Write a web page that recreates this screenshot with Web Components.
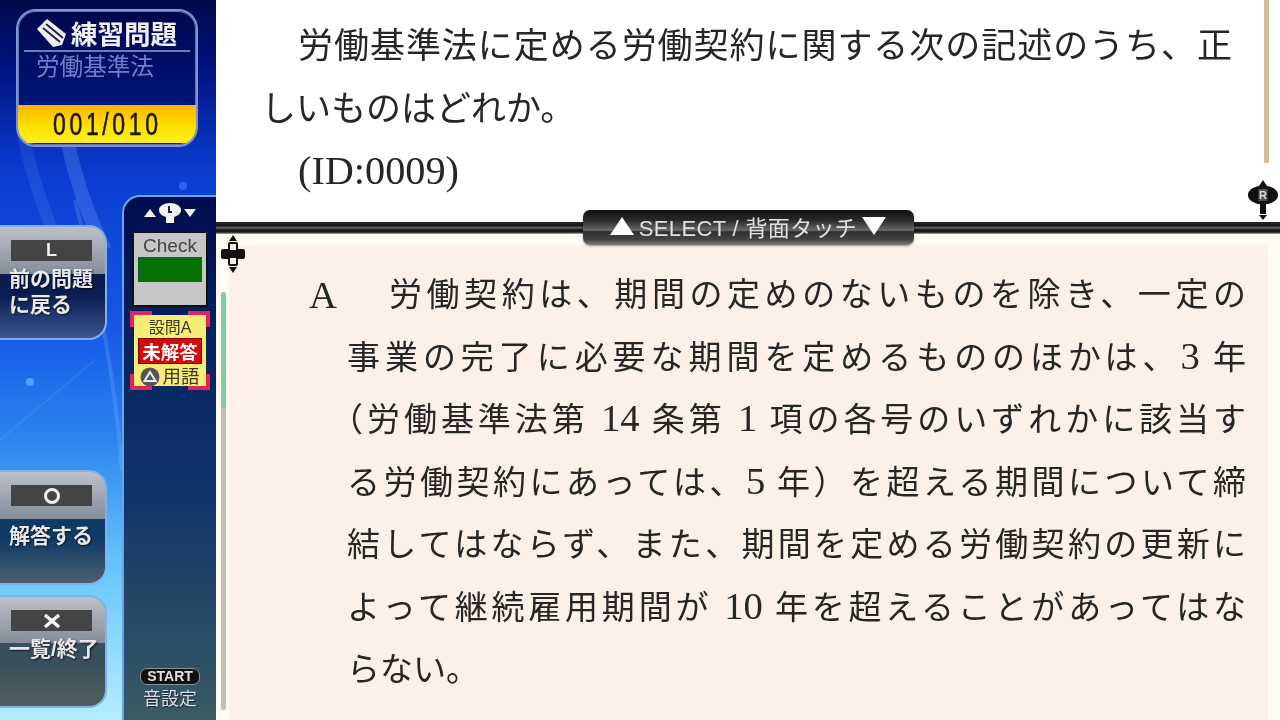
<!DOCTYPE html>
<html lang="ja">
<head>
<meta charset="utf-8">
<style>
html, body { margin: 0; height: 100%; overflow: hidden; }
body { font-family: "Liberation Sans", "Noto Sans CJK JP", sans-serif; }
/* latin runs sit larger than the kanji in the book text */
text-line b { font-weight: normal; font-size: 1.17em; line-height: 0; }
text-line b.id { font-size: 1.15em; }
</style>
</head>
<body>
<study-screen>
  <study-sidebar slot="side"></study-sidebar>
  <question-pane slot="top">
    <text-line indent>労働基準法に定める労働契約に関する次の記述のうち、正</text-line>
    <text-line left>しいものはどれか。</text-line>
    <text-line indent left><b class="id">(ID:0009)</b></text-line>
  </question-pane>
  <select-bar slot="bar"></select-bar>
  <answer-pane slot="bottom">
    <text-line lead="A">労働契約は、期間の定めのないものを除き、一定の</text-line>
    <text-line>事業の完了に必要な期間を定めるもののほかは、<b>3</b> 年</text-line>
    <text-line hang>（労働基準法第 <b>14</b> 条第 <b>1</b> 項の各号のいずれかに該当す</text-line>
    <text-line>る労働契約にあっては、<b>5</b> 年）を超える期間について締</text-line>
    <text-line>結してはならず、また、期間を定める労働契約の更新に</text-line>
    <text-line>よって継続雇用期間が <b>10</b> 年を超えることがあってはな</text-line>
    <text-line left>らない。</text-line>
  </answer-pane>
</study-screen>

<script>
const SERIF = '"Liberation Serif", "Noto Sans CJK JP", serif';

customElements.define('study-screen', class extends HTMLElement {
  constructor() {
    super();
    this.attachShadow({ mode: 'open' }).innerHTML = `
    <style>
      :host { display: flex; width: 1280px; height: 720px; background: #fff; overflow: hidden; filter: blur(.6px); }
      .main { flex: 1; display: flex; flex-direction: column; min-width: 0; }
      ::slotted([slot=side]) { flex: 0 0 216px; }
      ::slotted([slot=top]) { flex: 0 0 222px; }
      ::slotted([slot=bar]) { flex: 0 0 12px; min-height: 0; }
      ::slotted([slot=bottom]) { flex: 1; }
    </style>
    <slot name="side"></slot>
    <div class="main">
      <slot name="top"></slot>
      <slot name="bar"></slot>
      <slot name="bottom"></slot>
    </div>`;
  }
});

customElements.define('text-line', class extends HTMLElement {
  constructor() {
    super();
    const lead = this.getAttribute('lead');
    this.attachShadow({ mode: 'open' }).innerHTML = `
    <style>
      :host { display: block; position: relative; text-align: justify; text-align-last: justify; white-space: nowrap; }
      :host([left]) { text-align-last: left; }
      :host([indent]) { margin-left: 37px; }
      :host([lead]) { margin-left: 42px; }
      :host([hang]) { margin-left: -17px; }
      .lead { position: absolute; left: -80px; top: 0; font-size: 1.17em; }
    </style>
    ${lead ? `<span class="lead">${lead}</span>` : ''}<slot></slot>`;
  }
});

customElements.define('question-pane', class extends HTMLElement {
  constructor() {
    super();
    this.attachShadow({ mode: 'open' }).innerHTML = `
    <style>
      :host { display: flex; position: relative; background: #fff; color: #262626; box-sizing: border-box;
        padding: 15px 48px 0 45px; font: 35px/63px ${SERIF}; }
      .copy { flex: 1; min-width: 0; }
      .track { position: absolute; right: 11px; top: 0; width: 5px; height: 163px; background: #d2bd94; }
      .mark { position: absolute; right: 2px; top: 180px; line-height: 0; }
    </style>
    <div class="copy"><slot></slot></div>
    <div class="track"></div>
    <div class="mark">
      <svg width="30" height="40" viewBox="0 0 30 40">
        <path d="M15 0l4 6h-8zM15 40l-4-5h8z" fill="#111"/>
        <ellipse cx="15" cy="15" rx="15" ry="9.500" fill="#111"/>
        <rect x="12" y="20" width="6" height="14" fill="#111"/>
        <rect x="10.500" y="9" width="9" height="12" fill="#555"/>
        <text x="15" y="19" text-anchor="middle" font-size="11" font-weight="700" font-family="Liberation Sans" fill="#ddd">R</text>
      </svg>
    </div>`;
  }
});

customElements.define('answer-pane', class extends HTMLElement {
  constructor() {
    super();
    this.attachShadow({ mode: 'open' }).innerHTML = `
    <style>
      :host { display: block; position: relative; background: #fffaf2; min-height: 0; }
      .sheet { position: absolute; inset: 11px 12px 0 13px; background: #fdf0e8; box-sizing: border-box;
        padding: 19px 22px 0 118px; color: #262626; font: 33px/62.5px ${SERIF}; }
      .track { position: absolute; left: 5px; top: 58px; bottom: 10px; width: 5px; border-radius: 2px; background: linear-gradient(#7fd0a0 0 116px, #c8c0aa 116px); }
      .mark { position: absolute; left: 5px; top: 1px; line-height: 0; z-index: 1; }
    </style>
    <div class="sheet"><slot></slot></div>
    <div class="track"></div>
    <div class="mark">
      <svg width="24" height="38" viewBox="0 0 24 38">
        <path d="M12 0l4 6H8zM12 38l-4-6h8z" fill="#111"/>
        <path d="M7 9a2 2 0 0 1 2-2h6a2 2 0 0 1 2 2v5h5a2 2 0 0 1 2 2v6a2 2 0 0 1-2 2h-5v5a2 2 0 0 1-2 2H9a2 2 0 0 1-2-2v-5H2a2 2 0 0 1-2-2v-6a2 2 0 0 1 2-2h5z" fill="#111"/>
        <rect x="9" y="9" width="6" height="6" fill="#f4f0e8"/>
        <rect x="9" y="23" width="6" height="6" fill="#f4f0e8"/>
      </svg>
    </div>`;
  }
});

customElements.define('select-bar', class extends HTMLElement {
  constructor() {
    super();
    this.attachShadow({ mode: 'open' }).innerHTML = `
    <style>
      :host { display: flex; justify-content: center; align-items: center; position: relative; z-index: 2;
        background: linear-gradient(#222 0 16%, #111 30%, #666 48%, #111 66%, #222 85%, #bbb); }
      .pill { flex: 0 0 331px; height: 35px; box-sizing: border-box; border-radius: 7px; margin-top: -1px; padding-bottom: 3px;
        background: linear-gradient(#111, #2a2a2a 30%, #6a6a6a 58%, #303030 62%, #444 85%, #808080);
        color: #e0e0e0; font-size: 22px; letter-spacing: .35px; display: flex; align-items: center; justify-content: center; gap: 5px;
        box-shadow: 0 1px 2px rgba(0,0,0,.4); }
      svg { display: block; flex: none; }
    </style>
    <div class="pill">
      <svg width="24" height="20" viewBox="0 0 24 20"><path d="M12 1l12 18H0z" fill="#fff"/></svg>
      <span>SELECT / 背面タッチ</span>
      <svg width="24" height="20" viewBox="0 0 24 20"><path d="M0 1h24L12 19z" fill="#fff"/></svg>
    </div>`;
  }
});

customElements.define('study-sidebar', class extends HTMLElement {
  constructor() {
    super();
    this.attachShadow({ mode: 'open' }).innerHTML = `
    <style>
      :host { display: flex; flex-direction: column; box-sizing: border-box; height: 720px; overflow: hidden; position: relative;
        background: linear-gradient(#000a4a 0, #00107a 60px, #0a3cd0 170px, #1658e6 330px, #2a86ee 440px, #62c4fb 560px, #b4eeff 720px); }
      .streaks { position: absolute; left: 0; top: 0; }
      .cols { flex: 1; display: flex; margin-top: 48px; min-height: 0; position: relative; }
      .left { flex: 0 0 122px; display: flex; flex-direction: column; padding-top: 30px; box-sizing: border-box; }
      .ok { margin-top: 130px; --split: 47px; --from: #0f3a66; --to: #4c6070; --gap: 12px; }
      .quit { margin-top: 10px; --split: 46px; --from: #38505c; --to: #4e5e5c; }
      status-card { margin: 9px 0 0 16px; position: relative; }
    </style>
    <svg class="streaks" width="216" height="720" viewBox="0 0 216 720" fill="none">
      <path d="M58 80C64 140 80 200 105 250" stroke="#7fb0ff" stroke-opacity=".25" stroke-width="14"/>
      <path d="M22 130C32 180 48 220 60 250" stroke="#7fb0ff" stroke-opacity=".14" stroke-width="12"/>
      <path d="M75 200C100 300 115 380 122 470" stroke="#b0d0ff" stroke-opacity=".18" stroke-width="4"/>
      <path d="M0 440L95 360" stroke="#b0e0ff" stroke-opacity=".1" stroke-width="2"/>
      <circle cx="30" cy="382" r="4" fill="#7fd8ff" opacity=".5"/>
      <circle cx="183" cy="186" r="4" fill="#2a70ff" opacity=".8"/>
    </svg>
    <status-card></status-card>
    <div class="cols">
      <div class="left">
        <side-button key="L" style="height:115px">前の問題<br>に戻る</side-button>
        <side-button class="ok" style="height:115px" key="ring">解答する</side-button>
        <side-button class="quit" style="height:113px" key="cross">一覧/終了</side-button>
      </div>
      <tool-rail></tool-rail>
    </div>`;
  }
});

customElements.define('status-card', class extends HTMLElement {
  constructor() {
    super();
    this.attachShadow({ mode: 'open' }).innerHTML = `
    <style>
      :host { display: flex; flex-direction: column; width: 182px; height: 138px; box-sizing: border-box; flex: none;
        border: 2px solid #7f93d2; border-radius: 20px; overflow: hidden; background: linear-gradient(#00074e, #001a8c);
        box-shadow: inset 0 0 0 1px #5f74c0; }
      .title { display: flex; align-items: center; gap: 3px; height: 39px; padding: 4px 0 0 18px; box-sizing: border-box;
        color: #f0f0f0; font-weight: 700; font-size: 26.500px; }
      .rule { height: 2px; background: #6f7db4; margin: 0 6px; }
      .sub { flex: 1; padding: 2px 0 0 18px; color: #6f80c8; font-size: 23.600px; line-height: 27px; }
      .count { height: 38px; margin-bottom: 2px; background: linear-gradient(#fdb400, #fde000 55%, #ffef20); color: #1a1400;
        font: 32px/38px "Liberation Sans", sans-serif; text-align: center; -webkit-text-stroke: .5px #1a1400; }
      .count span { display: inline-block; letter-spacing: 5px; transform: scaleX(.72); transform-origin: center; white-space: nowrap; }
      svg { flex: none; }
    </style>
    <div class="title">
      <svg width="32" height="30" viewBox="0 0 32 30"><path d="M1 11L11 1l19 15-4 11-9 2z" fill="#f0f0f0"/><path d="M7 10l17 14M10 6l17 14" stroke="#1c2368" stroke-width="2"/></svg>
      <span>練習問題</span>
    </div>
    <div class="rule"></div>
    <div class="sub">労働基準法</div>
    <div class="count"><span>001/010</span></div>`;
  }
});

const KEY_FACES = {
  ring: '<svg width="18" height="18" viewBox="0 0 18 18"><circle cx="9" cy="9" r="6.500" fill="none" stroke="#eee" stroke-width="3"/></svg>',
  cross: '<svg width="18" height="18" viewBox="0 0 18 18"><path d="M2 3l14 12M16 3L2 15" fill="none" stroke="#f4f4f4" stroke-width="3.500"/></svg>'
};

customElements.define('side-button', class extends HTMLElement {
  constructor() {
    super();
    const key = this.getAttribute('key');
    this.attachShadow({ mode: 'open' }).innerHTML = `
    <style>
      :host { display: flex; flex-direction: column; position: relative; box-sizing: border-box; width: 107px; overflow: hidden;
        border-radius: 0 18px 18px 0; border: 2px solid #7fb0f0; border-left: 0;
        background: linear-gradient(#bcbfc6 0, #868e9a var(--split, 47px), var(--from, #0a1c50) var(--split, 47px), var(--from, #0a1c50) 60%, var(--to, #3a5690)); }
      .key { margin: 13px 0 0 11px; width: 81px; height: 21px; background: #444; color: #f0f0f0; display: flex; align-items: center; justify-content: center;
        font: 700 18px/21px "Liberation Sans", "Noto Sans CJK JP", sans-serif; }
      .label { margin: calc(5px + var(--gap, 0px)) 0 0 9px; color: #e8e8e8; font-weight: 700; font-size: 21px; line-height: 26px; white-space: nowrap;
        text-shadow: 1px 1px 2px rgba(0,0,0,.7); }
    </style>
    <div class="key">${KEY_FACES[key] || key}</div>
    <div class="label"><slot></slot></div>`;
  }
});

customElements.define('tool-rail', class extends HTMLElement {
  constructor() {
    super();
    this.attachShadow({ mode: 'open' }).innerHTML = `
    <style>
      :host { flex: 1; display: flex; flex-direction: column; align-items: center; box-sizing: border-box; min-height: 0;
        border: 2px solid #6ea2ea; border-right: 0; border-bottom: 0; border-radius: 18px 0 0 0; padding-top: 6px;
        background: linear-gradient(#000b50, #04205e 120px, #10366a 300px, #3a5a64); }
      .tip { display: flex; align-items: center; gap: 2px; height: 20px; }
      .check { width: 76px; height: 76px; box-sizing: border-box; margin-top: 8px; background: #c6c6c6; border: 2px solid #111;
        color: #444; font-size: 19px; text-align: center; line-height: 22px; padding-top: 2px; }
      .check i { display: block; width: 64px; height: 25px; margin: 0 auto; background: #067206; border: 1px solid #063; box-sizing: border-box; }
      .state { width: 80px; height: 79px; box-sizing: border-box; margin-top: 4px; position: relative;
        border: 4px solid transparent; background: #f8ec78 padding-box;
        display: flex; flex-direction: column; align-items: center; color: #3a3a20; font-size: 16px; line-height: 20px; padding-top: 3px; }
      .c { position: absolute; width: 22px; height: 16px; border: 4.500px solid #e0245c; box-sizing: border-box; }
      .c.a { left: -4px; top: -4px; border-right: 0; border-bottom: 0; }
      .c.b { right: -4px; top: -4px; border-left: 0; border-bottom: 0; }
      .c.d { left: -4px; bottom: -4px; border-right: 0; border-top: 0; }
      .c.e { right: -4px; bottom: -4px; border-left: 0; border-top: 0; }
      .red { width: 64px; height: 26px; flex: none; background: #d40a0a; color: #fff; font: 700 18.500px/24px "Noto Sans CJK JP", sans-serif; text-align: center; border: 1px solid #800; box-sizing: border-box; }
      .term { display: flex; align-items: center; gap: 2px; margin-top: 2px; font-size: 18.500px; line-height: 22px; white-space: nowrap; }
      .start { margin-top: auto; width: 60px; height: 17px; box-sizing: border-box; background: #111; border: 1px solid #8a949c; border-radius: 7px;
        color: #e0e0e0; font: 700 14px/15px "Liberation Sans", sans-serif; text-align: center; }
      .sound { color: #d8dce4; font-size: 18px; line-height: 22px; margin: 3px 0 10px; text-shadow: 1px 1px 1px rgba(0,0,0,.6); }
    </style>
    <div class="tip">
      <svg width="12" height="10" viewBox="0 0 12 10"><path d="M6 1l6 8H0z" fill="#f2f2f2"/></svg>
      <svg width="24" height="22" viewBox="0 0 24 22"><path d="M12 1c6 0 11 3 11 7s-4 6-7 7v6H8v-6c-3-1-7-3-7-7s5-7 11-7z" fill="#f2f2f2"/><path d="M11 4v6h3" stroke="#223" stroke-width="2" fill="none"/></svg>
      <svg width="12" height="10" viewBox="0 0 12 10"><path d="M0 1h12L6 9z" fill="#f2f2f2"/></svg>
    </div>
    <div class="check">Check<i></i></div>
    <div class="state">
      <span class="c a"></span><span class="c b"></span><span class="c d"></span><span class="c e"></span>
      <span>設問A</span>
      <div class="red">未解答</div>
      <div class="term">
        <svg width="20" height="20" viewBox="0 0 20 20"><circle cx="10" cy="10" r="9.500" fill="#555"/><path d="M10 5l5.500 9h-11z" fill="none" stroke="#eee" stroke-width="2"/></svg>
        <span>用語</span>
      </div>
    </div>
    <div class="start">START</div>
    <div class="sound">音設定</div>`;
  }
});
</script>
</body>
</html>
